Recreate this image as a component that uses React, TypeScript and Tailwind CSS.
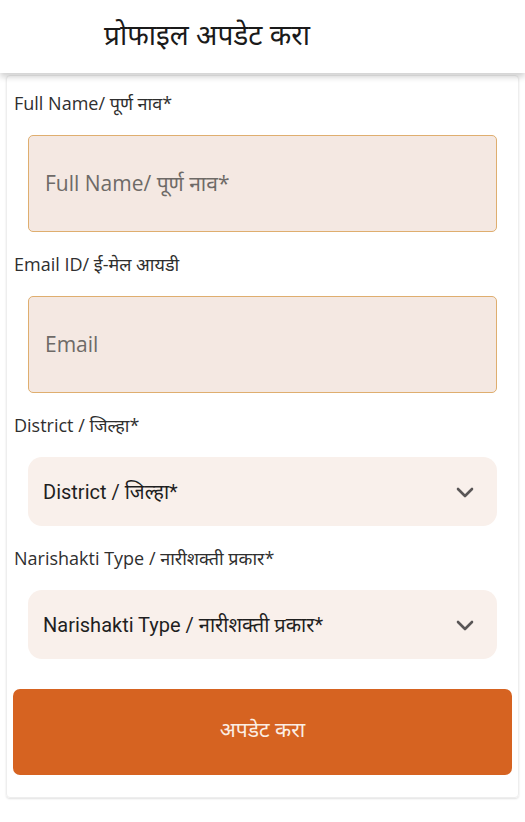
import React from "react";

const sans = "font-['Open_Sans','Noto_Sans',sans-serif]";

function Chevron() {
  return (
    <svg width="24" height="24" viewBox="0 0 24 24" fill="none" stroke="#5a5656" strokeWidth="2.6" strokeLinecap="round" strokeLinejoin="round">
      <path d="M5 9l7 7 7-7" />
    </svg>
  );
}

function FieldLabel({ text, first }: { text: string; first?: boolean }) {
  return (
    <label className={`text-[18px] leading-[24px] text-[#2f2f2f] pb-[20px] pl-[7px] ${first ? "pt-[15px]" : "pt-[20px]"}`}>
      {text}
    </label>
  );
}

function TextField({ label, placeholder, first }: { label: string; placeholder: string; first?: boolean }) {
  return (
    <div className="flex flex-col">
      <FieldLabel text={label} first={first} />
      <div className="mx-[21px] h-[97px] rounded-[5px] border-[1.5px] border-[#dfae6f] bg-[#f4e8e2] flex items-center pl-[16px]">
        <span className="text-[21px] text-[#6e6a67]">{placeholder}</span>
      </div>
    </div>
  );
}

function SelectField({ label, value }: { label: string; value: string }) {
  return (
    <div className="flex flex-col">
      <FieldLabel text={label} />
      <div className="mx-[21px] h-[69px] rounded-[14px] bg-[#f9f0eb] flex items-center justify-between pl-[15px] pr-[20px]">
        <span className="text-[20px] text-[#1f1f1f] font-['Roboto','Noto_Sans',sans-serif]">{value}</span>
        <Chevron />
      </div>
    </div>
  );
}

export default function App() {
  return (
    <div className={`w-[525px] min-h-[822px] bg-white ${sans}`}>
      <header className="h-[73px] bg-white shadow-[0_4px_6px_rgba(0,0,0,0.18)] flex items-center pl-[104px] relative z-10">
        <h1 className="text-[28px] text-[#1a1a1a] font-['Noto_Sans',sans-serif] pb-[6px]">प्रोफाइल अपडेट करा</h1>
      </header>
      <div className="mx-[6px] mt-[2px] border border-[#eeeeee] rounded-[4px] shadow-[0_1px_2px_rgba(0,0,0,0.12)] pb-[22px]">
        <TextField first label="Full Name/ पूर्ण नाव*" placeholder="Full Name/ पूर्ण नाव*" />
        <TextField label="Email ID/ ई-मेल आयडी" placeholder="Email" />
        <SelectField label="District / जिल्हा*" value="District / जिल्हा*" />
        <SelectField label="Narishakti Type / नारीशक्ती प्रकार*" value="Narishakti Type / नारीशक्ती प्रकार*" />
        <div className="px-[6px] pt-[30px]">
          <button type="button" className="w-full h-[86px] rounded-[7px] bg-[#d66321] text-[#fbeee4] text-[21px] font-['Noto_Sans',sans-serif] pb-[4px]">
            अपडेट करा
          </button>
        </div>
      </div>
    </div>
  );
}
